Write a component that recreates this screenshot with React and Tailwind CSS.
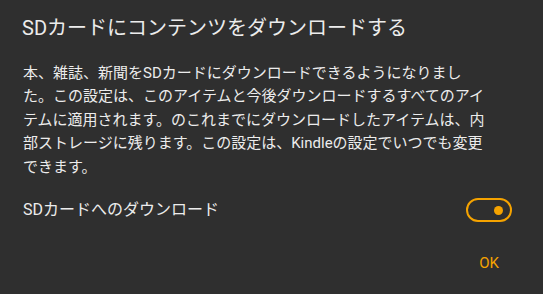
import React, { useState } from 'react';

const SdCardDialog = () => {
  const [enabled, setEnabled] = useState(true);

  return (
    <div className="w-[543px] h-[294px] bg-[#2f2f2f] text-[#ececec] font-['Roboto','Noto_Sans_CJK_JP',sans-serif] flex flex-col overflow-hidden">
      <h2 className="pl-[22px] pt-[14px] text-[20px] leading-[28px] font-normal">
        SDカードにコンテンツをダウンロードする
      </h2>

      <p className="pl-[23px] mt-[20px] text-[15px] leading-[23.4px] whitespace-nowrap">
        本、雑誌、新聞をSDカードにダウンロードできるようになりまし
        <br />
        た。この設定は、このアイテムと今後ダウンロードするすべてのアイ
        <br />
        テムに適用されます。のこれまでにダウンロードしたアイテムは、内
        <br />
        部ストレージに残ります。この設定は、Kindleの設定でいつでも変更
        <br />
        できます。
      </p>

      <div className="flex items-center justify-between pl-[23px] pr-[31px] mt-[19px] h-[24px]">
        <span className="text-[16px]">SDカードへのダウンロード</span>
        <button
          onClick={() => setEnabled(!enabled)}
          className="w-[46px] h-[24px] rounded-full border-2 border-[#f5a300] flex items-center justify-end pr-[7px]"
        >
          {enabled && <span className="w-[9px] h-[9px] rounded-full bg-[#f5a300]" />}
        </button>
      </div>

      <div className="flex justify-end pr-[44px] mt-[23px]">
        <button className="h-[36px] px-[8px] -mr-[8px] text-[15px] font-normal text-[#f5a300]">
          OK
        </button>
      </div>
    </div>
  );
};

export default function App() {
  return <SdCardDialog />;
}
